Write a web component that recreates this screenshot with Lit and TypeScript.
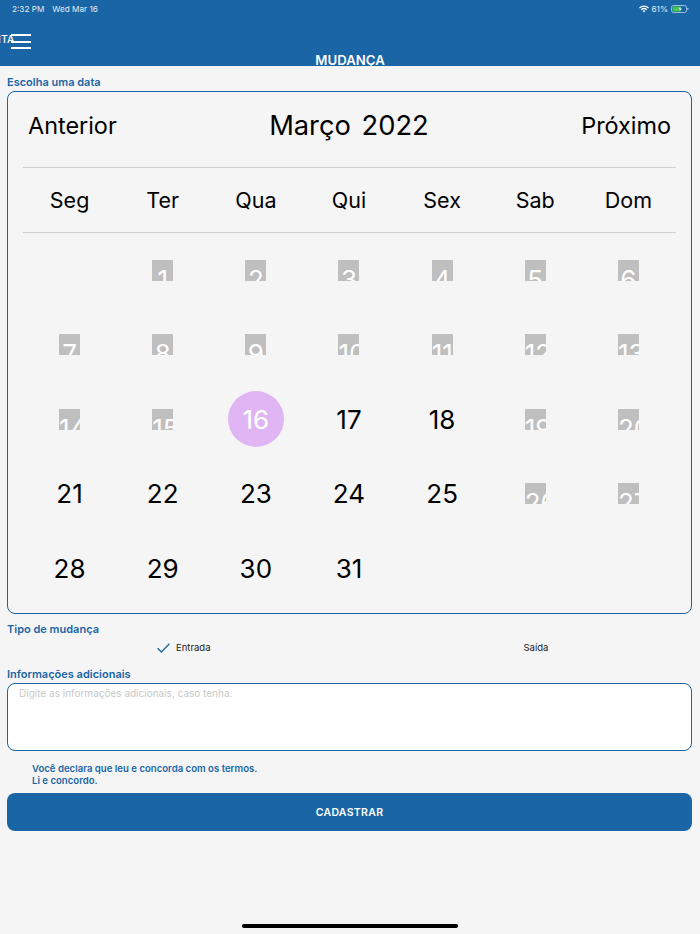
import { LitElement, html, css } from "lit";
import { customElement } from "lit/decorators.js";

const DISABLED = new Set([1, 2, 3, 4, 5, 6, 7, 8, 9, 10, 11, 12, 13, 14, 15, 19, 20, 26, 27]);
const WEEKDAYS = ["Seg", "Ter", "Qua", "Qui", "Sex", "Sab", "Dom"];

@customElement("app-root")
export class AppRoot extends LitElement {
  static styles = css`
    :host {
      display: block;
      width: 700px;
      height: 934px;
      font-family: Inter, "Liberation Sans", sans-serif;
      color: #000;
    }

    .page {
      height: 934px;
      display: flex;
      flex-direction: column;
      background: #f5f5f5;
      overflow: hidden;
    }

    .header {
      height: 66px;
      flex: none;
      background: #1a65a5;
      color: #fff;
      overflow: hidden;
    }

    .status {
      height: 17px;
      display: flex;
      align-items: center;
      padding: 0 11px 0 12px;
      font-size: 8.2px;
      color: #e3ecf5;
    }

    .status .date {
      margin-left: 8px;
    }

    .status .right {
      margin-left: auto;
      display: flex;
      align-items: center;
      gap: 3px;
    }

    .nav {
      height: 49px;
      position: relative;
    }

    .back {
      position: absolute;
      left: -19px;
      top: 16px;
      font-size: 10.5px;
      font-weight: 500;
      line-height: 14px;
    }

    .burger {
      position: absolute;
      left: 11px;
      top: 17px;
      width: 20px;
      height: 15px;
      display: flex;
      flex-direction: column;
      justify-content: space-between;
    }

    .burger span {
      height: 2px;
      background: #fff;
    }

    .title {
      position: absolute;
      left: 0;
      right: 0;
      top: 36px;
      text-align: center;
      font-size: 13.2px;
      font-weight: 600;
      line-height: 15px;
    }

    .content {
      padding: 0 8px 0 7px;
      display: flex;
      flex-direction: column;
    }

    .label {
      font-size: 11px;
      font-weight: 600;
      line-height: 14px;
      color: #1a65a5;
    }

    .label.first {
      margin-top: 9px;
      margin-bottom: 2px;
    }

    .calendar {
      height: 523px;
      box-sizing: border-box;
      border: 1px solid #1a65a5;
      border-radius: 8px;
      padding: 0 15px;
      display: flex;
      flex-direction: column;
    }

    .month {
      height: 76px;
      flex: none;
      box-sizing: border-box;
      display: flex;
      align-items: center;
      justify-content: space-between;
      padding: 0 5px 8px;
      font-size: 23.4px;
      border-bottom: 1px solid #d0d0d0;
    }

    .month .current {
      font-size: 27.3px;
      word-spacing: 3px;
    }

    .weekdays,
    .days {
      display: grid;
      grid-template-columns: repeat(7, 1fr);
    }

    .weekdays {
      height: 65px;
      flex: none;
      box-sizing: border-box;
      padding-right: 1px;
      align-items: center;
      text-align: center;
      font-size: 21.5px;
      border-bottom: 1px solid #d0d0d0;
    }

    .days {
      grid-auto-rows: 74.5px;
      padding-right: 1px;
    }

    .day {
      display: flex;
      align-items: center;
      justify-content: center;
      font-size: 26px;
    }

    .day .off {
      width: 21px;
      height: 21px;
      background: #bfbfbf;
      color: #fff;
      overflow: hidden;
      text-align: center;
      line-height: 40px;
      white-space: nowrap;
    }

    .day .selected {
      width: 56px;
      height: 56px;
      border-radius: 50%;
      background: #dfb6f3;
      color: #fff;
      display: flex;
      align-items: center;
      justify-content: center;
    }

    .type-label {
      margin-top: 8px;
    }

    .options {
      height: 23px;
      display: flex;
      align-items: center;
      font-size: 9.5px;
      color: #222;
    }

    .option {
      display: flex;
      align-items: center;
      gap: 6px;
    }

    .option.in {
      margin-left: 150px;
    }

    .option.out {
      margin-left: 313px;
    }

    .info-label {
      margin-top: 8px;
      margin-bottom: 2px;
    }

    .info {
      height: 68px;
      box-sizing: border-box;
      border: 1px solid #1a65a5;
      border-radius: 8px;
      background: #fff;
      padding: 2px 11px;
      font-size: 10px;
      line-height: 14px;
      color: #c9c9c9;
    }

    .terms {
      margin: 12px 0 0 25px;
      font-size: 9.6px;
      font-weight: 600;
      line-height: 12px;
      color: #1a65a5;
    }

    .submit {
      height: 38px;
      margin-top: 6px;
      border: none;
      border-radius: 8px;
      background: #1a65a5;
      color: #fff;
      font: 600 10.5px Inter, "Liberation Sans", sans-serif;
      letter-spacing: 0.3px;
    }

    .home {
      width: 216px;
      height: 4px;
      flex: none;
      margin: auto auto 6px;
      border-radius: 2px;
      background: #000;
    }
  `;

  private renderDay(day: number | null) {
    if (day === null) return html`<div class="day"></div>`;
    if (day === 16) return html`<div class="day"><div class="selected">${day}</div></div>`;
    if (DISABLED.has(day)) return html`<div class="day"><div class="off">${day}</div></div>`;
    return html`<div class="day">${day}</div>`;
  }

  render() {
    const days: (number | null)[] = [null];
    for (let i = 1; i <= 31; i++) days.push(i);

    return html`
      <div class="page">
        <div class="header">
          <div class="status">
            <span>2:32 PM</span>
            <span class="date">Wed Mar 16</span>
            <span class="right">
              <svg width="10" height="8" viewBox="0 0 20 15" fill="none" stroke="#fff" stroke-width="2.6">
                <path d="M1 5.5a13 13 0 0 1 18 0" />
                <path d="M4.5 9a8.2 8.2 0 0 1 11 0" />
                <path d="M10 14.5l-2.6-3a3.6 3.6 0 0 1 5.2 0z" fill="#fff" stroke="none" />
              </svg>
              <span>61%</span>
              <svg width="18" height="8" viewBox="0 0 18 8">
                <rect x="0.5" y="0.5" width="15" height="7" rx="2" fill="none" stroke="#9fc0dc" />
                <rect x="1.5" y="1.5" width="8" height="5" rx="1" fill="#3fc752" />
                <path d="M9.5 1.6L7.6 4.3h1.5L8.6 6.4l2.2-2.9H9.2z" fill="#fff" />
                <rect x="16.4" y="2.8" width="1" height="2.4" rx="0.5" fill="#9fc0dc" />
              </svg>
            </span>
          </div>
          <div class="nav">
            <span class="back">VISITA</span>
            <div class="burger"><span></span><span></span><span></span></div>
            <div class="title">MUDANÇA</div>
          </div>
        </div>

        <div class="content">
          <div class="label first">Escolha uma data</div>
          <div class="calendar">
            <div class="month">
              <span>Anterior</span>
              <span class="current">Março 2022</span>
              <span>Próximo</span>
            </div>
            <div class="weekdays">${WEEKDAYS.map((d) => html`<span>${d}</span>`)}</div>
            <div class="days">${days.map((d) => this.renderDay(d))}</div>
          </div>

          <div class="label type-label">Tipo de mudança</div>
          <div class="options">
            <div class="option in">
              <svg width="13" height="10" viewBox="0 0 13 10" fill="none" stroke="#1a65a5" stroke-width="1.3">
                <path d="M0.6 5.2L4.4 9L12.4 0.8" />
              </svg>
              <span>Entrada</span>
            </div>
            <div class="option out"><span>Saída</span></div>
          </div>

          <div class="label info-label">Informações adicionais</div>
          <div class="info">Digite as informações adicionais, caso tenha.</div>

          <div class="terms">
            Você declara que leu e concorda com os termos.<br />
            Li e concordo.
          </div>
          <button class="submit">CADASTRAR</button>
        </div>

        <div class="home"></div>
      </div>
    `;
  }
}

declare global {
  interface HTMLElementTagNameMap {
    "app-root": AppRoot;
  }
}
